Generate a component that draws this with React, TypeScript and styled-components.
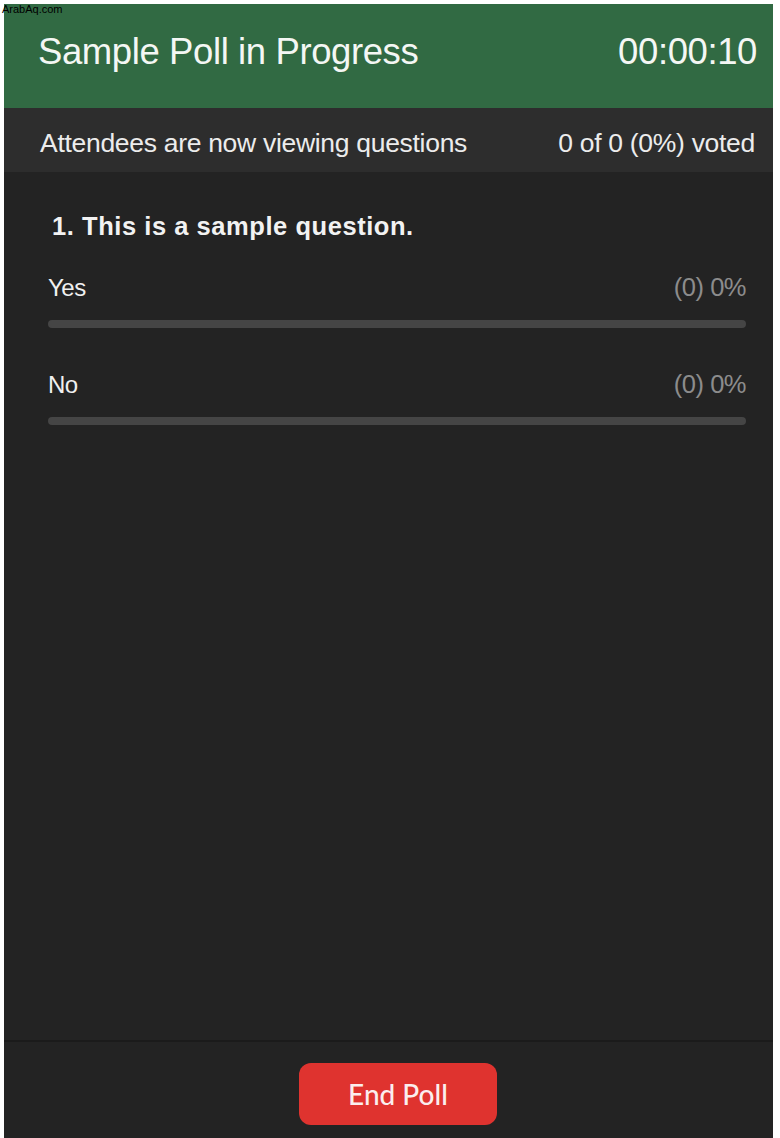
import styled, { createGlobalStyle } from 'styled-components';

const GlobalStyle = createGlobalStyle`
  html, body {
    margin: 0;
    padding: 0;
    background: #ffffff;
  }
`;

const Page = styled.div`
  position: relative;
  padding: 4px 7px 0 4px;
  height: 1138px;
  box-sizing: border-box;
`;

const Watermark = styled.span`
  position: absolute;
  top: 3px;
  left: 2px;
  font-family: 'Liberation Sans', Arial, sans-serif;
  font-size: 11px;
  line-height: 12px;
  color: #000;
`;

const Panel = styled.div`
  display: flex;
  flex-direction: column;
  height: 100%;
  background: #232323;
  font-family: 'Liberation Sans', Arial, sans-serif;
`;

const Header = styled.header`
  display: flex;
  align-items: center;
  justify-content: space-between;
  height: 104px;
  padding: 0 16px 8px 34px;
  box-sizing: border-box;
  background: #316a43;
  color: #f4f7f4;
  font-size: 36.5px;
  letter-spacing: -0.4px;
`;

const StatusBar = styled.div`
  display: flex;
  align-items: center;
  justify-content: space-between;
  height: 64px;
  padding: 6px 18px 0 36px;
  box-sizing: border-box;
  background: #2d2d2d;
  color: #ececec;
  font-size: 26.5px;
  letter-spacing: -0.3px;
`;

const Body = styled.main`
  flex: 1;
  padding: 40px 27px 0 44px;
`;

const Question = styled.h2`
  margin: 0 0 32px 4px;
  font-family: 'Liberation Sans', Arial, sans-serif;
  font-weight: 700;
  font-size: 25.5px;
  letter-spacing: 0.55px;
  color: #f2f2f2;
`;

const Option = styled.div`
  margin-bottom: 42px;
`;

const OptionRow = styled.div`
  display: flex;
  justify-content: space-between;
  align-items: baseline;
  font-size: 24px;
  letter-spacing: -0.5px;
`;

const OptionLabel = styled.span`
  color: #f0f0f0;
`;

const OptionCount = styled.span`
  color: #8c8c8c;
  font-size: 25.5px;
`;

const Track = styled.div`
  height: 8px;
  margin-top: 18px;
  border-radius: 4px;
  background: #454545;
  overflow: hidden;
`;

type FillProps = { $percent: number };
const Fill = styled.div<FillProps>`
  height: 100%;
  width: ${p => p.$percent}%;
  background: #2d8cff;
`;

const Footer = styled.footer`
  display: flex;
  justify-content: center;
  align-items: flex-start;
  height: 98px;
  padding: 21px 0 0 19px;
  box-sizing: border-box;
  border-top: 2px solid #1b1b1b;
`;

const EndButton = styled.button`
  width: 198px;
  height: 62px;
  border: none;
  border-radius: 12px;
  background: #df332f;
  color: #fbeeee;
  font-family: Lato, 'Noto Sans', sans-serif;
  font-size: 28px;
  font-weight: 500;
  cursor: pointer;
`;

const options = [
  { label: 'Yes', votes: 0, percent: 0 },
  { label: 'No', votes: 0, percent: 0 },
];

export default function App() {
  return (
    <>
      <GlobalStyle />
      <Page>
        <Watermark>ArabAq.com</Watermark>
        <Panel>
          <Header>
            <span>Sample Poll in Progress</span>
            <span>00:00:10</span>
          </Header>
          <StatusBar>
            <span>Attendees are now viewing questions</span>
            <span>0 of 0 (0%) voted</span>
          </StatusBar>
          <Body>
            <Question>1. This is a sample question.</Question>
            {options.map(o => (
              <Option key={o.label}>
                <OptionRow>
                  <OptionLabel>{o.label}</OptionLabel>
                  <OptionCount>({o.votes}) {o.percent}%</OptionCount>
                </OptionRow>
                <Track>
                  <Fill $percent={o.percent} />
                </Track>
              </Option>
            ))}
          </Body>
          <Footer>
            <EndButton>End Poll</EndButton>
          </Footer>
        </Panel>
      </Page>
    </>
  );
}
